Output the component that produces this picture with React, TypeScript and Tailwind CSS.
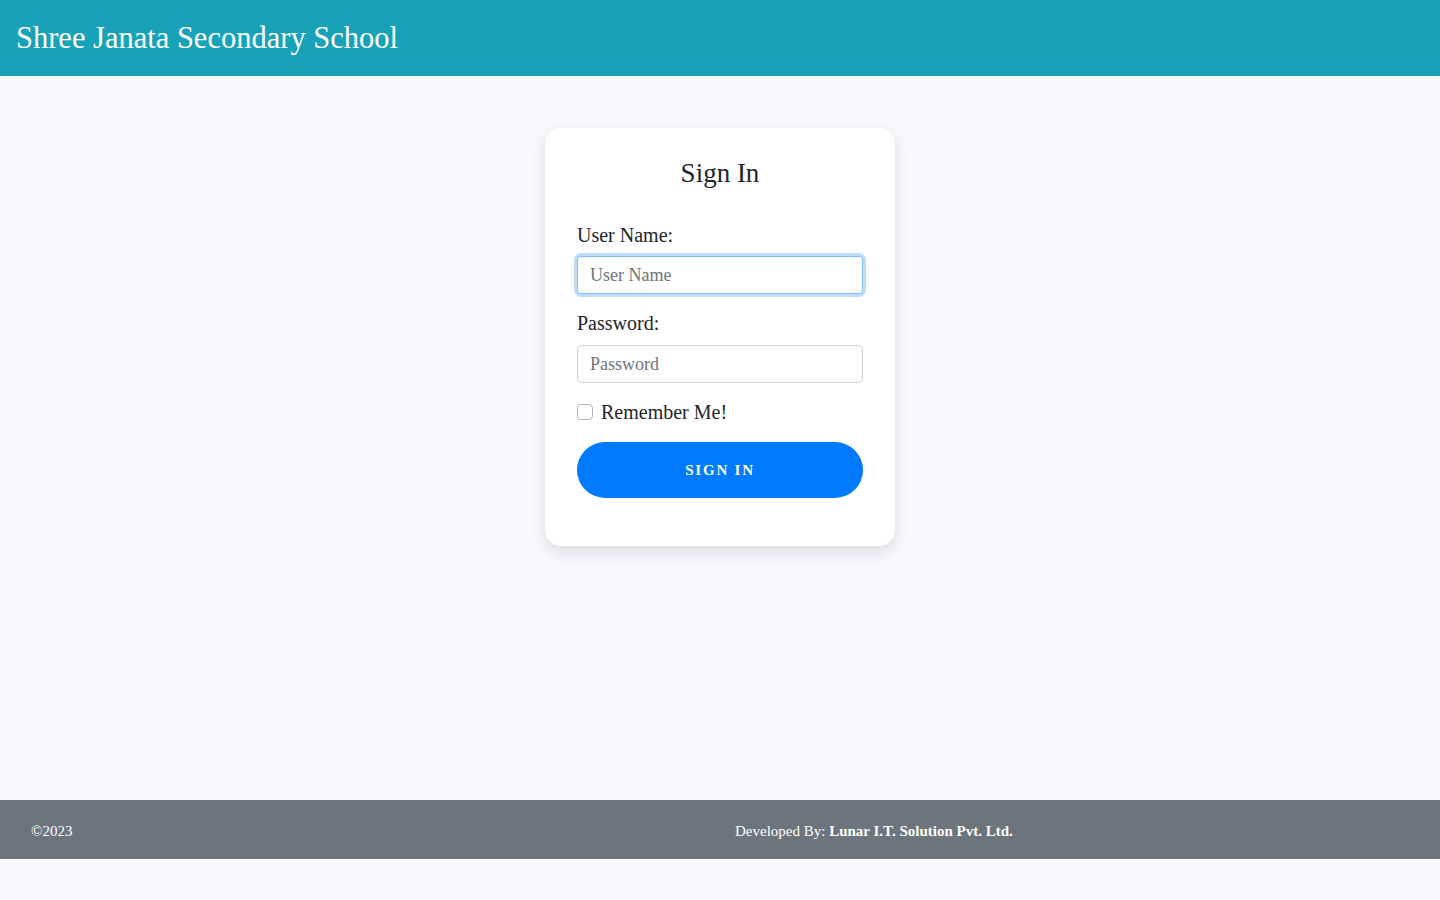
import { useState } from "react";

const serif = { fontFamily: '"Liberation Serif", "DejaVu Serif", serif' };

export default function App() {
  const [remember, setRemember] = useState(false);

  return (
    <div className="min-h-[900px] bg-[#f8f9fd] text-[#212529]" style={serif}>
      <header className="h-[76px] bg-[#18a2b8] flex items-center px-4">
        <h1 className="text-[30.5px] leading-none text-white">Shree Janata Secondary School</h1>
      </header>

      <main className="h-[724px] pt-[52px] flex justify-center">
        <div className="w-[350px] h-[418px] bg-white rounded-2xl shadow-[0_6px_16px_rgba(0,0,0,0.12)] px-8 pt-[28px]">
          <h2 className="text-center text-[27px] leading-[34px] text-[#212529]">Sign In</h2>

          <form className="mt-[33px]" onSubmit={(e) => e.preventDefault()}>
            <label className="block text-[20px] leading-6 mb-[9px]">User Name:</label>
            <input
              autoFocus
              placeholder="User Name"
              className="w-full h-[38px] rounded px-3 text-[18px] bg-white border border-[#80bdff] shadow-[0_0_0_3px_rgba(0,123,255,0.25)] outline-none placeholder:text-[#6c757d]"
              style={serif}
            />

            <label className="block text-[20px] leading-6 mt-[17px] mb-[10px]">Password:</label>
            <input
              type="password"
              placeholder="Password"
              className="w-full h-[38px] rounded px-3 text-[18px] bg-white border border-[#ced4da] outline-none placeholder:text-[#6c757d]"
              style={serif}
            />

            <label className="flex items-center gap-2 mt-[17px] text-[20px] leading-6">
              <input
                type="checkbox"
                checked={remember}
                onChange={(e) => setRemember(e.target.checked)}
                className="appearance-none w-4 h-4 rounded-[4px] border border-[#adb5bd] bg-white"
              />
              Remember Me!
            </label>

            <button
              type="submit"
              className="mt-[18px] w-full h-[56px] rounded-full bg-[#007bff] text-white text-[15px] font-bold tracking-[0.12em] uppercase"
              style={serif}
            >
              Sign In
            </button>
          </form>
        </div>
      </main>

      <footer className="h-[59px] bg-[#6c757d] text-white text-[15px] flex items-center pt-1">
        <div className="w-1/2 pl-[31px]">©2023</div>
        <div className="w-1/2 pl-[15px]">
          Developed By: <span className="font-bold">Lunar I.T. Solution Pvt. Ltd.</span>
        </div>
      </footer>
    </div>
  );
}
